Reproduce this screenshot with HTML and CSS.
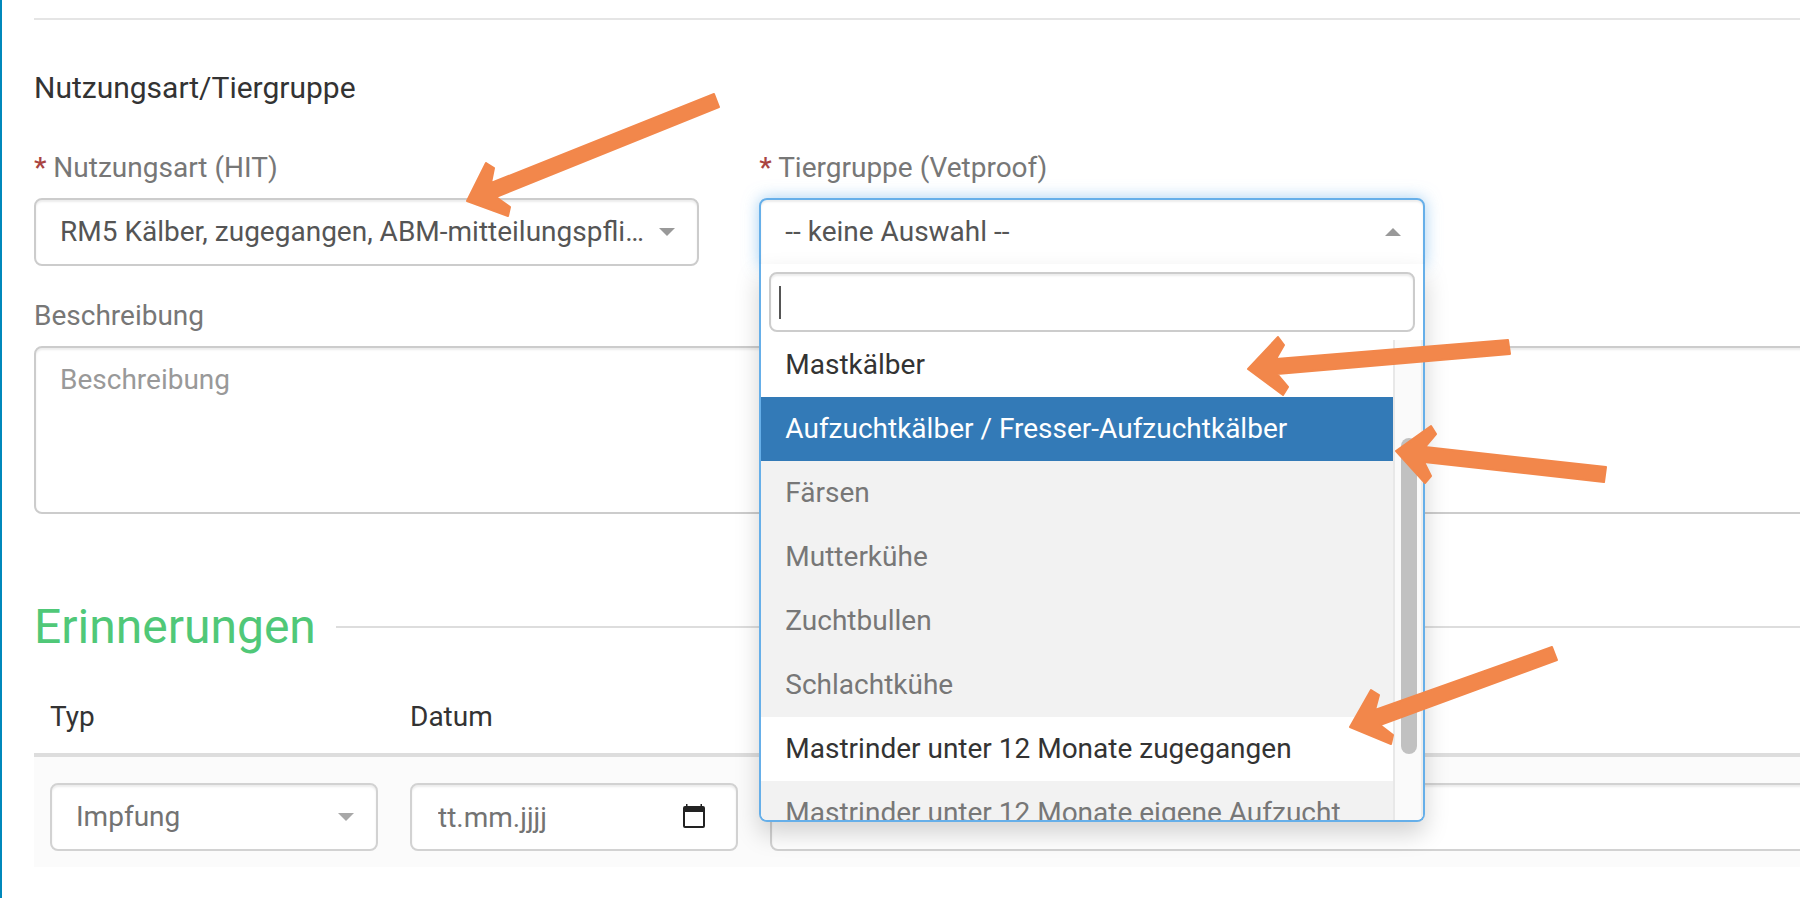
FILE: index.html
```html
<!DOCTYPE html>
<html lang="de">

<head>
    <meta charset="UTF-8" />
    <meta name="viewport" content="width=device-width, initial-scale=1.0" />
    <title>Nutzungsart/Tiergruppe</title>
    <link rel="stylesheet" href="styles.css">
</head>

<body>
    <form class="panel">
        <hr class="divider">

        <h4 class="group-title">Nutzungsart/Tiergruppe</h4>
        <div class="form-row">
            <div class="form-group">
                <label for="nutzungsart"><span class="required">*</span> Nutzungsart (HIT)</label>
                <div class="select-wrap">
                    <select id="nutzungsart" class="form-control">
                        <option>RM5 Kälber, zugegangen, ABM-mitteilungspflichtig</option>
                    </select>
                    <span class="caret"></span>
                </div>
            </div>

            <div class="form-group">
                <label for="tiergruppe"><span class="required">*</span> Tiergruppe (Vetproof)</label>
                <div class="select-wrap open">
                    <select id="tiergruppe" class="form-control">
                        <option>-- keine Auswahl --</option>
                    </select>
                    <span class="caret caret-up"></span>
                    <div class="dropdown">
                        <div class="search">
                            <input type="text" class="form-control search-field" aria-label="Suche">
                            <span class="cursor"></span>
                        </div>
                        <div class="results">
                            <ul class="options" id="options">
                                <li>Mastkälber</li>
                                <li class="highlighted">Aufzuchtkälber / Fresser-Aufzuchtkälber</li>
                                <li class="disabled">Färsen</li>
                                <li class="disabled">Mutterkühe</li>
                                <li class="disabled">Zuchtbullen</li>
                                <li class="disabled">Schlachtkühe</li>
                                <li>Mastrinder unter 12 Monate zugegangen</li>
                                <li class="disabled">Mastrinder unter 12 Monate eigene Aufzucht</li>
                            </ul>
                            <div class="scrollbar">
                                <div class="thumb"></div>
                            </div>
                        </div>
                    </div>
                </div>
            </div>
        </div>

        <div class="form-group">
            <label for="beschreibung">Beschreibung</label>
            <textarea id="beschreibung" class="form-control" placeholder="Beschreibung"></textarea>
        </div>

        <h2 class="section-title">Erinnerungen</h2>
        <table class="reminders">
            <thead>
                <tr>
                    <th class="col-small">Typ</th>
                    <th class="col-small">Datum</th>
                    <th></th>
                </tr>
            </thead>
            <tbody>
                <tr>
                    <td>
                        <div class="select-wrap">
                            <select class="form-control" aria-label="Typ">
                                <option>Impfung</option>
                            </select>
                            <span class="caret"></span>
                        </div>
                    </td>
                    <td>
                        <div class="select-wrap">
                            <input type="text" class="form-control date-field" placeholder="tt.mm.jjjj" aria-label="Datum">
                            <svg class="calendar" viewBox="0 0 22 24">
                                <path d="M3 0h1.500v2h13v-2h1.500v2h1q2 0 2 2v18q0 2-2 2H2q-2 0-2-2V4q0-2 2-2h1zM2 8v14h18V8z" />
                            </svg>
                        </div>
                    </td>
                    <td><input type="text" class="form-control" aria-label="Bemerkung"></td>
                </tr>
            </tbody>
        </table>
    </form>

    <!-- Hinweispfeile -->
    <svg class="arrows" width="1800" height="898" viewBox="0 0 1800 898">
        <path d="M467 201 486 163 494 168 491 183 714 94 719 107 496 197 510 207 508 216Z" />
        <path d="M1248 369 1278 337 1284 345 1276 359 1508 340 1510 354 1277 374 1288 387 1283 395Z" />
        <path d="M1396 451 1431 426 1436 434 1425 447 1606 467 1604 482 1424 462 1431 476 1425 483Z" />
        <path d="M1350 727 1371 690 1379 695 1375 710 1552 647 1557 660 1380 725 1393 735 1391 744Z" />
    </svg>

    <script>
        document.getElementById("options").scrollTop = 7;
    </script>
</body>

</html>
```
FILE: styles.css
```css
* {
    box-sizing: border-box;
}

body {
    margin: 0;
    position: relative;
    min-height: 100vh;
    overflow: hidden;
    border-left: 2px solid #0088bb;
    font-family: Roboto, "Liberation Sans", sans-serif;
    font-size: 28px;
    line-height: 40px;
    color: #333;
    background: #fff;
}

/* the form runs on past the right edge */
.panel {
    margin-right: -350px;
    padding: 18px 0 0 32px;
}

.divider {
    margin: 0 0 48px;
    border: 0;
    border-top: 2px solid #e5e5e5;
}

.group-title {
    margin: 0 0 40px;
    font-size: 30px;
    font-weight: 400;
}

.form-row {
    display: grid;
    grid-template-columns: repeat(3, 1fr);
    gap: 60px;
    margin-bottom: 30px;
}

label {
    display: block;
    margin-bottom: 10px;
    color: #777;
}

.required {
    font-weight: 500;
    color: #a94442;
}

.form-control {
    display: block;
    width: 100%;
    height: 68px;
    margin: 0;
    padding: 0 24px;
    border: 2px solid #ccc;
    border-radius: 8px;
    background: #fff;
    box-shadow: inset 0 2px 2px rgba(0, 0, 0, 0.075);
    font-family: inherit;
    font-size: 28px;
    line-height: 40px;
    color: #555;
    appearance: none;
    outline: none;
}

.form-control::placeholder {
    color: #999;
    opacity: 1;
}

select.form-control {
    padding-right: 52px;
    text-overflow: ellipsis;
}

textarea.form-control {
    height: 168px;
    padding: 12px 24px;
    resize: none;
}

.select-wrap {
    position: relative;
}

.caret {
    position: absolute;
    top: 30px;
    right: 24px;
    border: 8px solid transparent;
    border-top-color: #999;
    border-bottom: 0;
    pointer-events: none;
}

.caret-up {
    border: 8px solid transparent;
    border-top: 0;
    border-bottom-color: #999;
}

/* opened select */
.open > .form-control {
    border-color: #66afe9;
    border-radius: 8px 8px 0 0;
    box-shadow: inset 0 2px 2px rgba(0, 0, 0, 0.075), 0 0 16px rgba(102, 175, 233, 0.6);
}

.dropdown {
    position: absolute;
    top: 66px;
    left: 0;
    right: 0;
    z-index: 10;
    overflow: hidden;
    border: 2px solid #66afe9;
    border-top: 0;
    border-radius: 0 0 8px 8px;
    background: #fff;
    box-shadow: 0 12px 24px rgba(0, 0, 0, 0.175);
}

.search {
    position: relative;
    padding: 8px;
}

.search-field {
    height: 60px;
    padding: 0 8px;
}

.cursor {
    position: absolute;
    top: 22px;
    left: 18px;
    width: 2px;
    height: 33px;
    background: #555;
}

.results {
    display: flex;
    height: 480px;
}

.options {
    flex: 1;
    margin: 0;
    padding: 0;
    overflow: hidden;
    list-style: none;
}

.options li {
    padding: 12px 24px;
    white-space: nowrap;
}

.options .highlighted {
    background: #337ab7;
    color: #fff;
}

.options .disabled {
    background: #f2f2f2;
    color: #777;
}

.scrollbar {
    width: 30px;
    padding: 98px 4px 0 6px;
    border-left: 2px solid #e8e8e8;
    border-right: 2px solid #ededed;
    background: #fafafa;
}

.thumb {
    width: 16px;
    height: 316px;
    border-radius: 8px;
    background: #c1c1c1;
}

.section-title {
    display: flex;
    align-items: center;
    gap: 20px;
    margin: 85px 0 42px;
    font-size: 48px;
    font-weight: 400;
    line-height: 56px;
    color: #50c878;
}

.section-title::after {
    content: "";
    flex: 1;
    height: 2px;
    background: #ddd;
}

.reminders {
    width: 100%;
    border-collapse: separate;
    border-spacing: 0;
    table-layout: fixed;
}

.reminders .col-small {
    width: 360px;
}

.reminders th {
    height: 60px;
    padding: 0 16px 16px;
    border-bottom: 4px solid #ddd;
    font-weight: 400;
    text-align: left;
}

.reminders td {
    padding: 26px 16px 16px;
    background: #fbfbfb;
}

.reminders .form-control {
    border-color: #d2d2d2;
    color: #737373;
}

.reminders .form-control::placeholder {
    color: #737373;
}

.reminders .caret {
    border-top-color: #a8a8a8;
}

.date-field {
    padding: 0 26px;
}

.calendar {
    position: absolute;
    top: 21px;
    right: 33px;
    width: 22px;
    height: 24px;
    fill: #222;
}

/* annotation arrows */
.arrows {
    position: absolute;
    top: 0;
    left: -2px;
    z-index: 20;
    pointer-events: none;
    fill: #f2874b;
    stroke: #f2874b;
    stroke-width: 2px;
    stroke-linejoin: round;
}
```
